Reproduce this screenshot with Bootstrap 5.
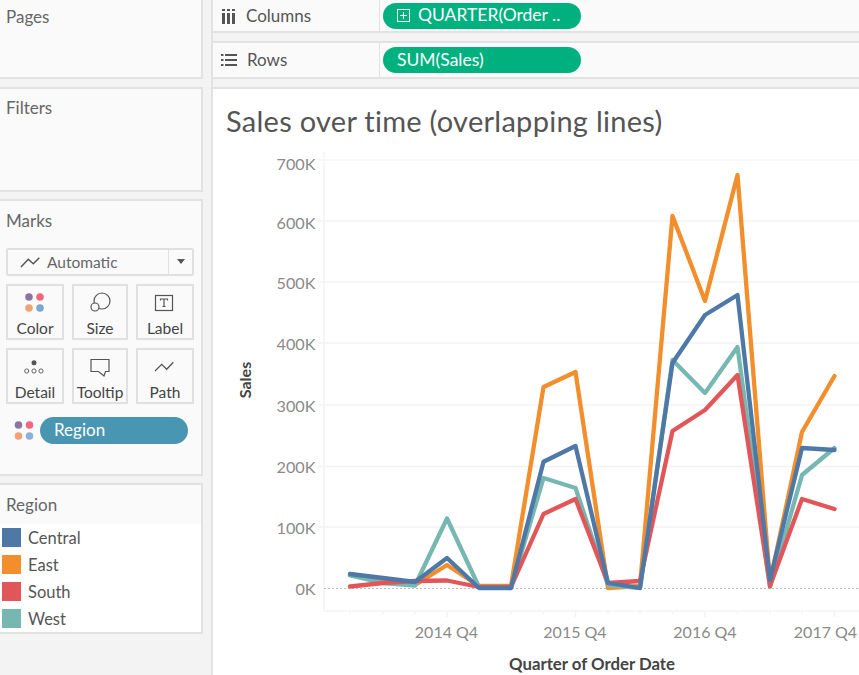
<!DOCTYPE html>
<html lang="en">
<head>
<meta charset="utf-8">
<title>Sales over time</title>
<link href="https://cdn.jsdelivr.net/npm/bootstrap@5.3.0/dist/css/bootstrap.min.css" rel="stylesheet">
<style>
html,body{height:100%;overflow:hidden}
body{background:#f3f3f3;font-family:Lato,"Noto Sans",sans-serif;color:#555;font-size:17px}
.wb{width:859px;height:675px;gap:8px}
.side{width:203px;gap:7px}
.pane{background:#fafafa;border:2px solid #e2e2e2;border-left:0;padding:10px 7px 0 6px;line-height:20px}
.p-pages{height:79px;border-top:0;padding-top:7px}
.p-filters{height:105px;margin-top:1px;padding-top:9px}
.p-marks{height:277px}
.p-legend{height:151px;padding:0}
.pane-title{color:#666;font-size:17px}
.main{width:648px;border-left:2px solid #e2e2e2}
.shelf{background:#fafafa;border-bottom:2px solid #e2e2e2}
.shelf-cols{height:33px;margin-bottom:8px}
.shelf-rows{border-top:2px solid #e2e2e2;height:38px;margin-bottom:8px}
.shelf-name{width:167px;border-right:1px solid #e2e2e2;padding-left:8px;gap:10px;color:#555;font-size:17px}
.pill-green{background:#00b180;color:#fff;width:198px;height:26px;margin-left:3px;border-radius:13px;padding-left:14px;gap:8px;font-size:17.500px}
.plot{background:#fff;border-top:2px solid #e2e2e2;height:588px;width:100%}
.plot svg{display:block}
.mk-select{height:28px;margin-top:17px;border:2px solid #e0e0e0;border-radius:2px;background:#fafafa}
.mk-select-main{flex:1;padding-left:12px;gap:7px;color:#666;font-size:15.500px}
.mk-caret{width:24px;border-left:1px solid #e0e0e0}
.mk-grid{display:grid;grid-template-columns:58px 56px 58px;column-gap:8px;row-gap:8px;margin-top:8px}
.mk-card{height:56px;border:2px solid #e0e0e0;background:#fafafa;color:#444;font-size:15.500px;line-height:18px;padding-top:5px;text-indent:-2px}
.mk-card svg{display:block;width:100%;height:24px;margin-bottom:4px}
.mk-pill-row{margin-top:13px;gap:5px;padding-left:8px}
.pill-blue{background:#4996b2;color:#fff;width:148px;height:27px;border-radius:14px;padding:0 0 2px 14px;font-size:17px}
.lg-head{height:39px;padding:10px 6px 0;background:#fafafa}
.lg-body{background:#fff;height:108px;padding-left:2px}
.lg-row{height:27px;gap:7px;color:#555;font-size:16.500px}
.sw{width:19px;height:19px;display:block}
.c1{background:#4e79a7}.c2{background:#f28e2b}.c3{background:#e15759}.c4{background:#76b7b2}
</style>
</head>
<body>
<div class="wb d-flex">
  <div class="side d-flex flex-column flex-shrink-0">
    <div class="pane p-pages"><span class="pane-title">Pages</span></div>
    <div class="pane p-filters"><span class="pane-title">Filters</span></div>
    <div class="pane p-marks">
      <span class="pane-title">Marks</span>
      <div class="mk-select d-flex">
        <div class="mk-select-main d-flex align-items-center">
          <svg width="20" height="12" viewBox="0 0 20 12" fill="none" stroke="#555" stroke-width="1.500"><path d="M1 11 8.300 3.300l5 4.400 6-6"/></svg>Automatic
        </div>
        <div class="mk-caret d-flex align-items-center justify-content-center">
          <svg width="10" height="6" viewBox="0 0 10 6"><path d="M1 0h8L5 5z" fill="#555"/></svg>
        </div>
      </div>
      <div class="mk-grid">
        <div class="mk-card text-center">
          <svg viewBox="0 0 54 24"><circle cx="21" cy="6" r="3.800" fill="#8a76a0"/><circle cx="32" cy="6" r="3.800" fill="#f0677e"/><circle cx="21" cy="17" r="3.800" fill="#f0a276"/><circle cx="32" cy="17" r="3.800" fill="#7fa6cf"/></svg>Color
        </div>
        <div class="mk-card text-center">
          <svg viewBox="0 0 52 24" fill="#fafafa" stroke="#555" stroke-width="1.200"><circle cx="28" cy="10" r="8"/><circle cx="21" cy="16" r="4"/></svg>Size
        </div>
        <div class="mk-card text-center">
          <svg viewBox="0 0 54 24" fill="none" stroke="#555"><rect x="17.500" y="4.500" width="17" height="15" stroke-width="1.200"/><path d="M22.500 9.500V8h7v1.500M26 8v7.500M24.500 15.500h3" stroke-width="1.200"/></svg>Label
        </div>
        <div class="mk-card text-center">
          <svg viewBox="0 0 54 24" fill="none" stroke="#555" stroke-width=".9"><circle cx="26" cy="7.700" r="2.500" fill="#555" stroke="none"/><circle cx="18.700" cy="16" r="2.100"/><circle cx="26" cy="16" r="2.100"/><circle cx="33" cy="16" r="2.100"/></svg>Detail
        </div>
        <div class="mk-card text-center">
          <svg viewBox="0 0 52 24" fill="none" stroke="#555" stroke-width="1.200"><path d="M17 4.500h18v12h-3.500L30 21l-5.500-4.500H17z"/></svg>Tooltip
        </div>
        <div class="mk-card text-center">
          <svg viewBox="0 0 54 24" fill="none" stroke="#555" stroke-width="1.300"><path d="M17 16l6.700-6.700 5 5 6.600-7"/></svg>Path
        </div>
      </div>
      <div class="mk-pill-row d-flex align-items-center">
        <svg width="21" height="22" viewBox="0 0 21 22"><circle cx="4.500" cy="5" r="3.800" fill="#8a76a0"/><circle cx="15.500" cy="5" r="3.800" fill="#f0677e"/><circle cx="4.500" cy="16" r="3.800" fill="#f0a276"/><circle cx="15.500" cy="16" r="3.800" fill="#8fb0d6"/></svg>
        <div class="pill-blue d-flex align-items-center">Region</div>
      </div>
    </div>
    <div class="pane p-legend">
      <div class="lg-head pane-title">Region</div>
      <div class="lg-body">
        <div class="lg-row d-flex align-items-center"><span class="sw c1"></span>Central</div>
        <div class="lg-row d-flex align-items-center"><span class="sw c2"></span>East</div>
        <div class="lg-row d-flex align-items-center"><span class="sw c3"></span>South</div>
        <div class="lg-row d-flex align-items-center"><span class="sw c4"></span>West</div>
      </div>
    </div>
  </div>
  <div class="main d-flex flex-column flex-shrink-0">
    <div class="shelf shelf-cols d-flex align-items-center">
      <div class="shelf-name h-100 d-flex align-items-center">
        <svg width="15" height="16" viewBox="0 0 15 16" fill="#555"><rect x="1" y="5" width="3" height="11"/><rect x="6" y="5" width="3" height="11"/><rect x="11" y="5" width="3" height="11"/><rect x="1" y="1" width="3" height="2"/><rect x="6" y="1" width="3" height="2"/><rect x="11" y="1" width="3" height="2"/></svg>
        <span>Columns</span>
      </div>
      <div class="pill-green d-flex align-items-center">
        <svg width="13" height="13" viewBox="0 0 13 13" fill="none" stroke="#fff"><rect x=".5" y=".5" width="12" height="12"/><path d="M3 6.500h7M6.500 3v7"/></svg>
        <span>QUARTER(Order ..</span>
      </div>
    </div>
    <div class="shelf shelf-rows d-flex align-items-center">
      <div class="shelf-name h-100 d-flex align-items-center">
        <svg width="16" height="14" viewBox="0 0 16 14" fill="#555"><rect x="0" y="1" width="2.500" height="2"/><rect x="4" y="1" width="12" height="2"/><rect x="0" y="6" width="2.500" height="2"/><rect x="4" y="6" width="12" height="2"/><rect x="0" y="11" width="2.500" height="2"/><rect x="4" y="11" width="12" height="2"/></svg>
        <span>Rows</span>
      </div>
      <div class="pill-green d-flex align-items-center"><span>SUM(Sales)</span></div>
    </div>
    <div class="plot">
      <svg width="646" height="586" viewBox="213 89 646 586" font-family="Lato,'Noto Sans',sans-serif">
        <text x="226" y="132" font-size="29" letter-spacing=".27" fill="#555">Sales over time (overlapping lines)</text>
        <g stroke="#f3f3f3" stroke-width="1.500" fill="none">
          <path d="M324 152V611M318 160H859M318 221H859M318 282H859M318 343H859M318 405H859M318 466.500H859M318 527H859M324 611H859"/>
          <path d="M350 611v3M383 611v3M415 611v3M447 611v6M479 611v3M511 611v3M543.500 611v3M575.500 611v6M608 611v3M640 611v3M672.500 611v3M705 611v6M737.500 611v3M770 611v3M802 611v3M834.500 611v6"/>
        </g>
        <path d="M324 588.500H859" stroke="#bbb" stroke-width="1" stroke-dasharray="2 2" fill="none"/>
        <g font-size="16.200" fill="#8a8a8a" text-anchor="end">
          <text x="315.500" y="170">700K</text><text x="315.500" y="229">600K</text><text x="315.500" y="289">500K</text><text x="315.500" y="350">400K</text><text x="315.500" y="412">300K</text><text x="315.500" y="473">200K</text><text x="315.500" y="534">100K</text><text x="315.500" y="595">0K</text>
        </g>
        <g font-size="16" fill="#8a8a8a" text-anchor="middle">
          <text x="446.500" y="637.500">2014 Q4</text><text x="575" y="637.500">2015 Q4</text><text x="705" y="637.500">2016 Q4</text><text x="825.500" y="637.500">2017 Q4</text>
        </g>
        <text x="592" y="670" font-size="16.800" font-weight="700" fill="#444" text-anchor="middle">Quarter of Order Date</text>
        <text transform="translate(251 380) rotate(-90)" font-size="16" font-weight="700" fill="#444" text-anchor="middle">Sales</text>
        <g fill="none" stroke-width="4.300" stroke-linejoin="round" stroke-linecap="round">
          <polyline stroke="#f28e2b" points="350,574 383,580 415,585 447,565 479,586 511,586 543.500,387 575.500,372 608,588 640,586 672.500,216 705,301 737.500,175 770,582 802,432 834.500,376"/>
          <polyline stroke="#76b7b2" points="350,575.500 383,583 415,585.500 447,518.500 479,587 511,588 543.500,478 575.500,488 608,585 640,588 672.500,360 705,393 737.500,347 770,587 802,475 834.500,448"/>
          <polyline stroke="#e15759" points="350,586.500 383,583 415,581 447,580.500 479,587 511,587 543.500,514 575.500,499 608,583 640,581 672.500,431 705,410 737.500,375 770,586 802,499 834.500,509"/>
          <polyline stroke="#4e79a7" points="350,574 383,578 415,582 447,558 479,588 511,588 543.500,461.700 575.500,446 608,583 640,588 672.500,363 705,315 737.500,295 770,580 802,448 834.500,450"/>
        </g>
      </svg>
    </div>
  </div>
</div>
<script src="https://cdn.jsdelivr.net/npm/bootstrap@5.3.0/dist/js/bootstrap.bundle.min.js"></script>
</body>
</html>
